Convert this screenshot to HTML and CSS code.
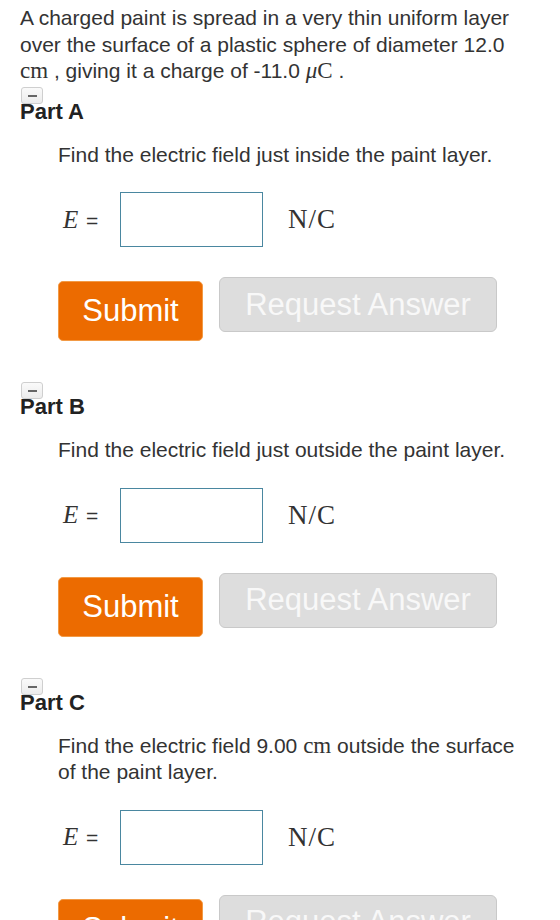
FILE: index.html
```html
<!DOCTYPE html>
<html>
<head>
<meta charset="UTF-8">
<title>Charged sphere</title>
<link rel="stylesheet" href="styles.css">
</head>
<body>
<div class="PROBLEM">
    <p class="INTRO">A charged paint is spread in a very thin uniform layer over the surface of a plastic sphere of diameter 12.0 <span class="MATH">cm</span> , giving it a charge of -11.0 <span class="MATH"><i>&mu;</i>C</span> .</p>

    <!-- part A -->
    <div class="PART">
        <div class="PART_HEAD">
            <span class="TOGGLE"><span class="DASH"></span></span>
            <h2 class="PART_TITLE">Part A</h2>
        </div>
        <div class="PART_BODY">
            <p class="QUESTION">Find the electric field just inside the paint layer.</p>
            <div class="ANSWER_ROW">
                <span class="LABEL"><i class="VAR">E</i> =</span>
                <input class="ANSWER" type="text">
                <span class="UNIT">N/C</span>
            </div>
            <div class="BTN_ROW">
                <button class="BTN_SUBMIT">Submit</button>
                <button class="BTN_REQUEST">Request Answer</button>
            </div>
        </div>
    </div>

    <!-- part B -->
    <div class="PART">
        <div class="PART_HEAD">
            <span class="TOGGLE"><span class="DASH"></span></span>
            <h2 class="PART_TITLE">Part B</h2>
        </div>
        <div class="PART_BODY">
            <p class="QUESTION">Find the electric field just outside the paint layer.</p>
            <div class="ANSWER_ROW">
                <span class="LABEL"><i class="VAR">E</i> =</span>
                <input class="ANSWER" type="text">
                <span class="UNIT">N/C</span>
            </div>
            <div class="BTN_ROW">
                <button class="BTN_SUBMIT">Submit</button>
                <button class="BTN_REQUEST">Request Answer</button>
            </div>
        </div>
    </div>

    <!-- part C -->
    <div class="PART">
        <div class="PART_HEAD">
            <span class="TOGGLE"><span class="DASH"></span></span>
            <h2 class="PART_TITLE">Part C</h2>
        </div>
        <div class="PART_BODY">
            <p class="QUESTION">Find the electric field 9.00 <span class="MATH">cm</span> outside the surface of the paint layer.</p>
            <div class="ANSWER_ROW">
                <span class="LABEL"><i class="VAR">E</i> =</span>
                <input class="ANSWER" type="text">
                <span class="UNIT">N/C</span>
            </div>
            <div class="BTN_ROW">
                <button class="BTN_SUBMIT">Submit</button>
                <button class="BTN_REQUEST">Request Answer</button>
            </div>
        </div>
    </div>
</div>
</body>
</html>
```

FILE: styles.css
```css
body {
    margin: 0;
    background: #fff;
    color: #333;
    font-family: "Liberation Sans", Arial, sans-serif;
    font-size: 21px;
}
.PROBLEM {
    padding: 5px 34px 0 20px;
}
p {
    margin: 0;
    line-height: 26.5px;
}
.MATH {
    font-family: "Liberation Serif", "DejaVu Serif", serif;
    font-size: 23px;
    line-height: 1;
}
.MATH i {
    font-style: italic;
}

/* part header with collapse toggle */
.PART {
    margin-top: 2px;
}
.PART + .PART {
    margin-top: 41px;
}
.PART_HEAD {
    position: relative;
    padding-top: 12px;
}
.TOGGLE {
    position: absolute;
    left: 1px;
    top: 0;
    width: 20px;
    height: 15px;
    border: 1px solid #cfcfcf;
    border-radius: 3px;
    background: linear-gradient(#fafafa, #ececec);
}
.TOGGLE .DASH {
    position: absolute;
    left: 6px;
    top: 7px;
    width: 9px;
    height: 2px;
    background: #666;
}
.PART_TITLE {
    position: relative;
    margin: 0;
    font-size: 22px;
    line-height: 26px;
    font-weight: bold;
    color: #222;
}

.PART_BODY {
    padding-left: 38px;
}
.QUESTION {
    margin-top: 17px;
}

/* answer line */
.ANSWER_ROW {
    display: flex;
    align-items: center;
    margin-top: 24px;
    padding-left: 5px;
}
.LABEL {
    width: 57px;
    font-size: 21px;
}
.VAR {
    font-family: "Liberation Serif", "DejaVu Serif", serif;
    font-size: 25px;
    margin-right: 2px;
}
.ANSWER {
    box-sizing: border-box;
    width: 143px;
    height: 55px;
    margin: 0;
    border: 1.5px solid #4a87a0;
    background: #fff;
    outline: none;
}
.UNIT {
    margin-left: 25px;
    font-family: "Liberation Serif", "DejaVu Serif", serif;
    font-size: 27px;
    letter-spacing: 1px;
    color: #333;
}

/* submit / request buttons */
.BTN_ROW {
    display: flex;
    align-items: flex-start;
    margin-top: 30px;
}
.BTN_SUBMIT {
    box-sizing: border-box;
    width: 145px;
    height: 60px;
    margin-top: 4px;
    border: 1px solid #f29a45;
    border-radius: 5px;
    background: #ec6b00;
    color: #fff;
    font-family: "Liberation Sans", Arial, sans-serif;
    font-size: 31px;
    padding: 0;
}
.BTN_REQUEST {
    box-sizing: border-box;
    width: 278px;
    height: 55px;
    margin-left: 16px;
    border: 1px solid #c9c9c9;
    border-radius: 6px;
    background: #dddddd;
    color: #f8f8f8;
    font-family: "Liberation Sans", Arial, sans-serif;
    font-size: 31px;
    padding: 0;
}
```
